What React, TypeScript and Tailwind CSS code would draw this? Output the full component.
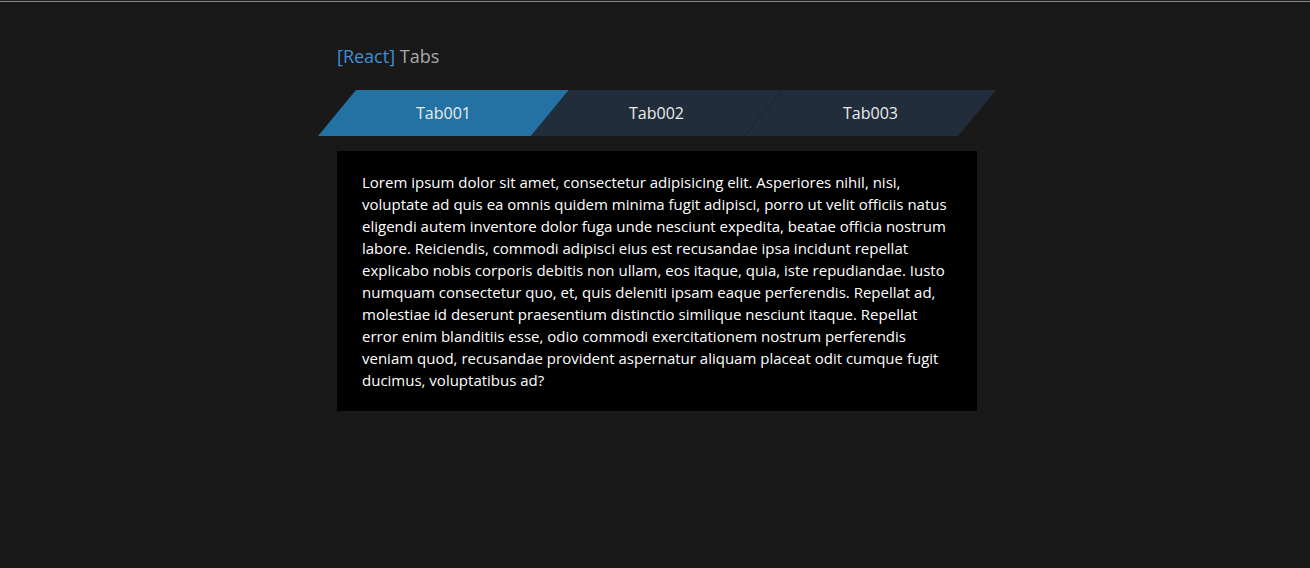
import { useState } from 'react';

const tabs = ['Tab001', 'Tab002', 'Tab003'];

const text =
  'Lorem ipsum dolor sit amet, consectetur adipisicing elit. Asperiores nihil, nisi, voluptate ad quis ea omnis quidem minima fugit adipisci, porro ut velit officiis natus eligendi autem inventore dolor fuga unde nesciunt expedita, beatae officia nostrum labore. Reiciendis, commodi adipisci eius est recusandae ipsa incidunt repellat explicabo nobis corporis debitis non ullam, eos itaque, quia, iste repudiandae. Iusto numquam consectetur quo, et, quis deleniti ipsam eaque perferendis. Repellat ad, molestiae id deserunt praesentium distinctio similique nesciunt itaque. Repellat error enim blanditiis esse, odio commodi exercitationem nostrum perferendis veniam quod, recusandae provident aspernatur aliquam placeat odit cumque fugit ducimus, voluptatibus ad?';

export default function App() {
  const [active, setActive] = useState(0);

  return (
    <div className="min-h-[568px] bg-[#191919] font-['Open_Sans',sans-serif]">
      <div className="h-px bg-[#1e1e1e]" />
      <div className="h-px bg-[#8a8a8a]" />
      <div className="flex justify-center pl-[4px]">
        <div className="w-[640px] pt-[41px]">
          <h1 className="text-[18px] leading-[27px] text-[#a9a9a9]">
            <span className="text-[#3d8fd6]">[React]</span> Tabs
          </h1>

          <div className="mt-[20px] flex h-[46px]">
            {tabs.map((t, i) => (
              <button
                key={t}
                onClick={() => setActive(i)}
                className={
                  'relative flex-1 skew-x-[-39.5deg] ' +
                  (i === active ? 'bg-[#2372a3]' : 'bg-[#212d3a]') +
                  (i > 0 && i !== active && i - 1 !== active ? ' border-l border-[#1d2833]' : '')
                }
              >
                <span className="block skew-x-[39.5deg] text-[16px] text-[#ececec]">{t}</span>
              </button>
            ))}
          </div>

          <div className="mt-[15px] bg-black px-[25px] pt-[20px] pb-[20px] text-[15px] leading-[22px] text-white">
            {text}
          </div>
        </div>
      </div>
    </div>
  );
}
